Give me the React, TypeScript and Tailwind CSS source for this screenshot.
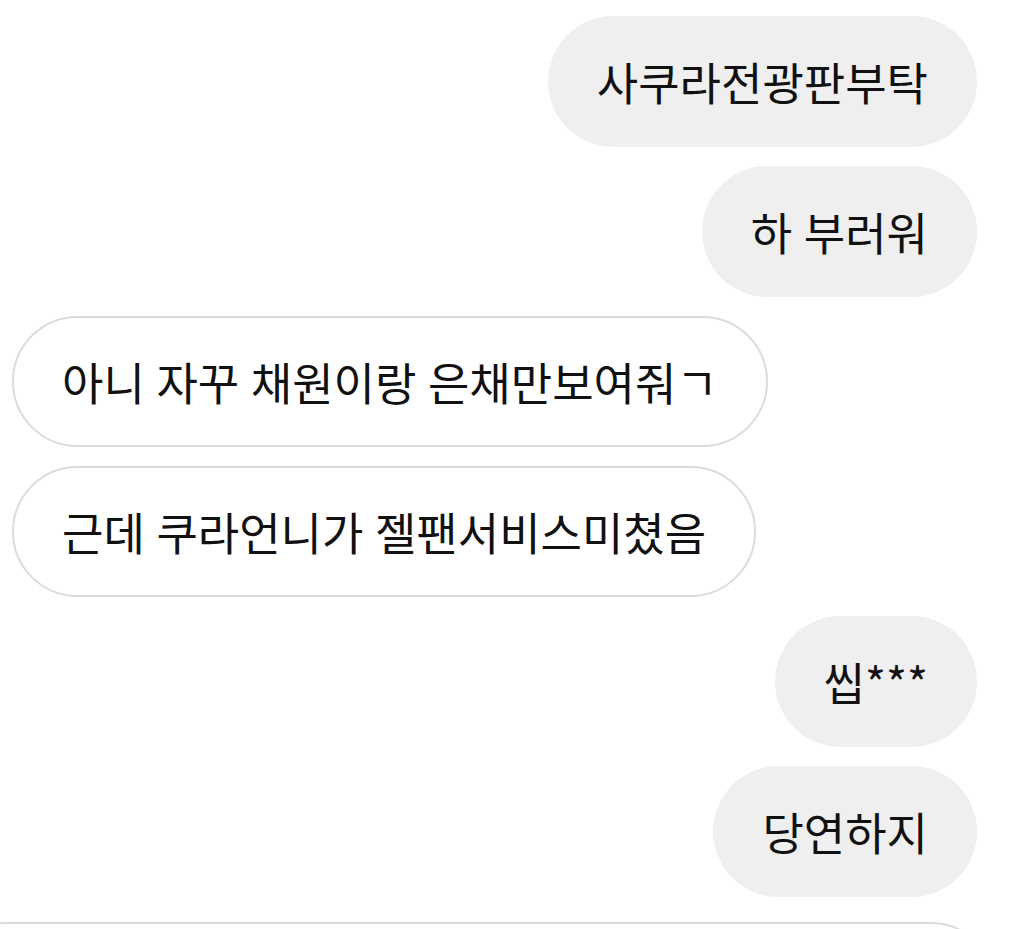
import React from 'react';

type Msg = { text: string; mine: boolean };

const messages: Msg[] = [
  { text: '사쿠라전광판부탁', mine: true },
  { text: '하 부러워', mine: true },
  { text: '아니 자꾸 채원이랑 은채만보여줘ㄱ', mine: false },
  { text: '근데 쿠라언니가 젤팬서비스미쳤음', mine: false },
  { text: '씹***', mine: true },
  { text: '당연하지', mine: true },
];

function Bubble({ text, mine }: Msg) {
  if (mine) {
    return (
      <div className="self-end mr-[37px] h-[131px] flex items-center rounded-full bg-[#efefef] px-[49px]">
        <span className="whitespace-nowrap">{text}</span>
      </div>
    );
  }
  return (
    <div className="self-start ml-[12px] h-[131px] flex items-center rounded-full border-2 border-[#dbdbdb] bg-white px-[48px]">
      <span className="whitespace-nowrap">{text}</span>
    </div>
  );
}

export default function App() {
  return (
    <div
      className="h-[929px] w-full overflow-hidden bg-white text-[45px] font-normal leading-none text-[#111111] [word-spacing:1.5px]"
      style={{ fontFamily: '"Noto Sans CJK KR", "Noto Sans", sans-serif' }}
    >
      <div className="flex flex-col gap-[19px] pt-[16px]">
        {messages.map((m, i) => (
          <Bubble key={i} {...m} />
        ))}
        {/* next incoming message, cut off by the bottom edge */}
        <div className="mt-[6px] ml-[-60px] mr-[18px] h-[131px] rounded-[66px] border-2 border-[#dbdbdb] bg-white" />
      </div>
    </div>
  );
}
